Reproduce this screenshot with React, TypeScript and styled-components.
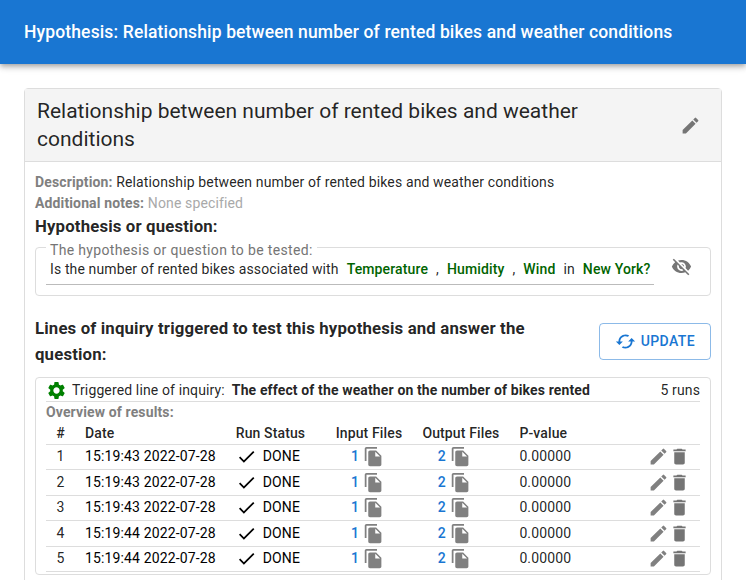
import React from "react";
import styled, { createGlobalStyle } from "styled-components";
import {
  MdCached,
  MdCheck,
  MdDelete,
  MdEdit,
  MdFileCopy,
  MdSettings,
  MdVisibilityOff,
} from "react-icons/md";

const GlobalStyle = createGlobalStyle`
  *, *::before, *::after { box-sizing: border-box; }
  body {
    margin: 0;
    background: #fff;
    color: rgba(0, 0, 0, 0.87);
    font-family: Roboto, "Liberation Sans", sans-serif;
    font-size: 14px;
    line-height: 21px;
    letter-spacing: 0.00938em;
    -webkit-font-smoothing: antialiased;
  }
  svg { display: block; flex: none; }
`;

const Page = styled.div`
  height: 100vh;
  overflow: hidden;
`;

const AppBar = styled.header`
  display: flex;
  align-items: center;
  height: 64px;
  padding: 0 24px;
  background: #1976d2;
  color: #fff;
  box-shadow: 0 2px 4px -1px rgba(0, 0, 0, 0.2), 0 4px 5px 0 rgba(0, 0, 0, 0.14),
    0 1px 10px 0 rgba(0, 0, 0, 0.12);
`;

const AppTitle = styled.h1`
  margin: 0;
  font-size: 17.5px;
  font-weight: 500;
  line-height: 28px;
  letter-spacing: 0.0078em;
`;

const Card = styled.main`
  margin: 24px 24px 0;
  min-height: 600px;
  border: 1px solid #ddd;
  border-radius: 4px;
`;

const CardHeader = styled.div`
  display: flex;
  align-items: center;
  justify-content: space-between;
  height: 73px;
  padding: 0 20px 0 12px;
  background: #f4f4f4;
  border-bottom: 1px solid #ddd;
`;

const CardTitle = styled.h2`
  margin: 0;
  max-width: 600px;
  font-size: 21px;
  font-weight: 400;
  line-height: 28px;
  letter-spacing: 0;
`;

const IconButton = styled.button<{ $color?: string }>`
  display: flex;
  padding: 0;
  border: 0;
  background: none;
  color: ${(p) => p.$color ?? "#757575"};
  font-size: 21px;
`;

const CardBody = styled.div`
  padding: 10px 10px 0;
`;

const Field = styled.div`
  height: 21px;
`;

const Label = styled.b`
  font-weight: 700;
  color: gray;
`;

const Muted = styled.span`
  color: #a9a9a9;
`;

const SectionTitle = styled.h3`
  margin: 0;
  font-size: 16.8px;
  font-weight: 700;
  line-height: 26px;
  letter-spacing: 0.15px;
`;

const QuestionTitle = styled(SectionTitle)`
  line-height: 25px;
`;

const QuestionBox = styled.fieldset`
  display: flex;
  justify-content: space-between;
  height: 57px;
  margin: 0;
  padding: 0 18px 0 10px;
  border: 1px solid #ddd;
  border-radius: 4px;
`;

const Legend = styled.legend`
  height: 16px;
  padding: 0 4px;
  color: #757575;
  line-height: 22px;
  letter-spacing: 0.34px;
`;

const Question = styled.div`
  display: flex;
  width: 608px;
  height: 30px;
  padding: 4px 0 0 4px;
  border-bottom: 1px solid #bbb;
  white-space: pre;
`;

const HideButton = styled(IconButton)`
  margin-top: 1px;
`;

const Variable = styled.span`
  margin: 0 8px;
  color: darkgreen;
  font-weight: 500;
`;

const LinesHeader = styled.div`
  display: flex;
  align-items: center;
  justify-content: space-between;
  margin: 19px 0 10px;
`;

const LinesTitle = styled(SectionTitle)`
  width: 520px;
`;

const UpdateButton = styled.button`
  display: flex;
  align-items: center;
  justify-content: space-between;
  width: 112px;
  height: 37px;
  padding: 0 15px 0 15px;
  border: 1px solid rgba(25, 118, 210, 0.5);
  border-radius: 4px;
  background: none;
  color: #1976d2;
  font: 500 14px/24px Roboto, sans-serif;
  letter-spacing: 0.4px;
`;

const Results = styled.section`
  height: 198px;
  padding: 0 10px;
  border: 1px solid #ddd;
  border-radius: 4px;
`;

const TriggeredLine = styled.div`
  display: flex;
  align-items: center;
  height: 24px;
  padding-top: 2px;
  border-bottom: 1px solid #ddd;
`;

const GearIcon = styled(MdSettings)`
  margin-right: 5px;
  color: green;
  font-size: 21px;
`;

const LineName = styled.b`
  margin-left: 7px;
`;

const RunCount = styled.span`
  margin-left: auto;
`;

const Overview = styled.div`
  height: 20px;
  line-height: 20px;
`;

const Row = styled.div<{ $head?: boolean }>`
  display: grid;
  grid-template-columns: 29px 10px 150.7px 100px 86.7px 97px 1fr 62px;
  align-items: center;
  height: ${(p) => (p.$head ? "22.5px" : "25.5px")};
  padding-top: ${(p) => (p.$head ? "1px" : "0")};
  border-bottom: 1px solid #ddd;
  font-weight: ${(p) => (p.$head ? 500 : 400)};
`;

const Index = styled.span`
  text-align: center;
`;

const DateCell = styled.span`
  grid-column: 3;
`;

const RunDate = styled(DateCell)`
  color: #000;
`;

const Status = styled.span`
  display: flex;
  align-items: center;
  gap: 6px;
  color: #000;
`;

const StatusIcon = styled(MdCheck)`
  font-size: 21px;
`;

const Files = styled.span`
  display: flex;
  align-items: center;
  gap: 4px;
  padding-left: 15.3px;
  color: #1976d2;
  font-weight: 500;
`;

const FilesIcon = styled(MdFileCopy)`
  color: gray;
  font-size: 21px;
`;

const Actions = styled.span`
  display: flex;
  justify-content: flex-end;
  padding-right: 10px;
`;

const times = [
  "15:19:43 2022-07-28",
  "15:19:43 2022-07-28",
  "15:19:43 2022-07-28",
  "15:19:44 2022-07-28",
  "15:19:44 2022-07-28",
];

export default function App() {
  return (
    <Page>
      <GlobalStyle />
      <AppBar>
        <AppTitle>
          Hypothesis: Relationship between number of rented bikes and weather conditions
        </AppTitle>
      </AppBar>
      <Card>
        <CardHeader>
          <CardTitle>Relationship between number of rented bikes and weather conditions</CardTitle>
          <IconButton aria-label="Edit hypothesis">
            <MdEdit />
          </IconButton>
        </CardHeader>
        <CardBody>
          <Field>
            <Label>Description:</Label> Relationship between number of rented bikes and weather
            conditions
          </Field>
          <Field>
            <Label>Additional notes:</Label> <Muted>None specified</Muted>
          </Field>
          <QuestionTitle>Hypothesis or question:</QuestionTitle>
          <QuestionBox>
            <Legend>The hypothesis or question to be tested:</Legend>
            <Question>
              Is the number of rented bikes associated with
              <Variable>Temperature</Variable>,<Variable>Humidity</Variable>,
              <Variable>Wind</Variable>in<Variable>New York?</Variable>
            </Question>
            <HideButton aria-label="Hide question">
              <MdVisibilityOff />
            </HideButton>
          </QuestionBox>
          <LinesHeader>
            <LinesTitle>
              Lines of inquiry triggered to test this hypothesis and answer the question:
            </LinesTitle>
            <UpdateButton>
              <MdCached size={21} />
              UPDATE
            </UpdateButton>
          </LinesHeader>
          <Results>
            <TriggeredLine>
              <GearIcon />
              Triggered line of inquiry:
              <LineName>The effect of the weather on the number of bikes rented</LineName>
              <RunCount>5 runs</RunCount>
            </TriggeredLine>
            <Overview>
              <Label>Overview of results:</Label>
            </Overview>
            <Row $head>
              <Index>#</Index>
              <DateCell>Date</DateCell>
              <span>Run Status</span>
              <span>Input Files</span>
              <span>Output Files</span>
              <span>P-value</span>
            </Row>
            {times.map((time, i) => (
              <Row key={i}>
                <Index>{i + 1}</Index>
                <RunDate>{time}</RunDate>
                <Status>
                  <StatusIcon />
                  DONE
                </Status>
                <Files>
                  1<FilesIcon />
                </Files>
                <Files>
                  2<FilesIcon />
                </Files>
                <span>0.00000</span>
                <Actions>
                  <IconButton $color="gray" aria-label="Edit run">
                    <MdEdit />
                  </IconButton>
                  <IconButton aria-label="Delete run">
                    <MdDelete />
                  </IconButton>
                </Actions>
              </Row>
            ))}
          </Results>
        </CardBody>
      </Card>
    </Page>
  );
}
